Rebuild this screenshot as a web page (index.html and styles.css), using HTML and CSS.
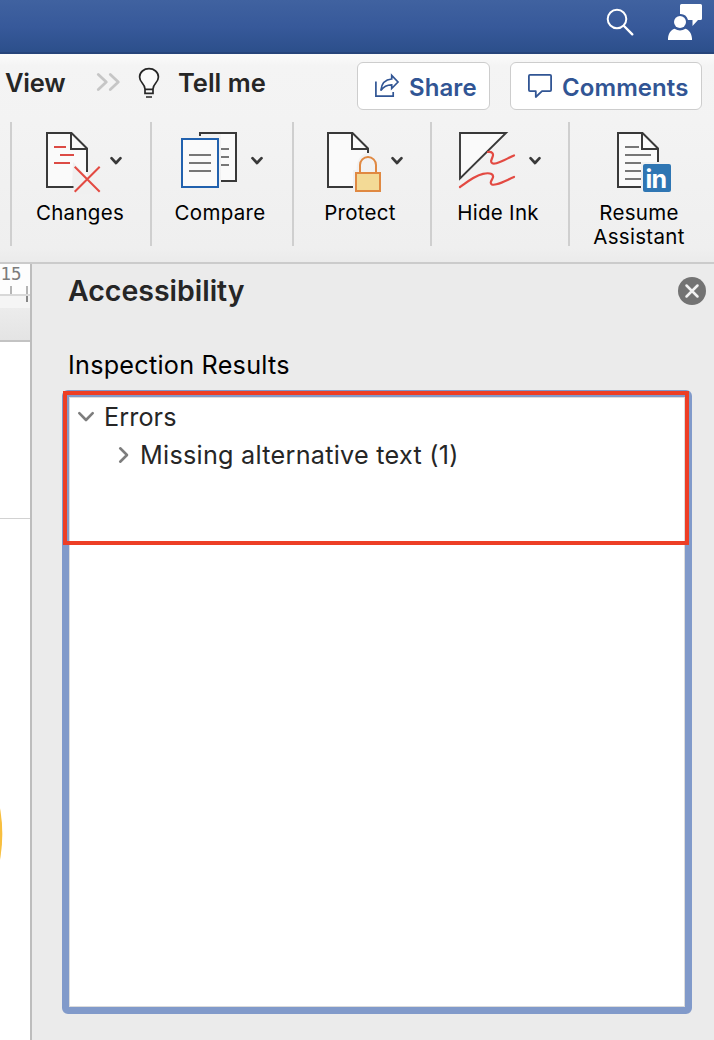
FILE: index.html
```html
<!DOCTYPE html>
<html lang="en">
<head>
<meta charset="utf-8">
<title>Accessibility</title>
<link rel="stylesheet" href="styles.css">
</head>
<body>
<header class="titlebar">
  <svg class="ico-search" width="30" height="30" viewBox="604 6 30 30" fill="none" stroke="#fff"><circle cx="617" cy="19" r="9.3" stroke-width="2"/><path d="M624 26L632.3 34.3" stroke-width="2.4" stroke-linecap="round"/></svg>
  <svg class="ico-user" width="36" height="38" viewBox="667 3 36 38" fill="#fff"><path d="M681.5 4H700.5Q702 4 702 5.500V18.500Q702 20 700.500 20H698L692.500 26V20H688A8 8 0 0 0 680 14V5.500Q680 4 681.500 4Z"/><circle cx="680" cy="22" r="7.600" fill="#37599a"/><circle cx="680" cy="22" r="6"/><path d="M668 40V38.500C668.500 33 671 30 674.500 28.800Q680 32 685.500 28.800C689 30 691.500 33 692 38.500V40Z"/></svg>
</header>

<nav class="tabs">
  <span class="tab tab-view">View</span>
  <svg class="ico-more" width="26" height="24" viewBox="95 70 26 24" fill="none" stroke="#c6c6c6" stroke-width="2.800" stroke-linecap="round" stroke-linejoin="round"><path d="M98.300 74.500L106.300 82L98.300 89.500M110.300 74.500L118.300 82L110.300 89.500"/></svg>
  <svg class="ico-bulb" width="24" height="32" viewBox="137 67 24 32" fill="none" stroke="#262626" stroke-width="1.700"><path d="M145 89C145 83.500 139.600 83 139.600 77C139.600 72 144 68.700 149 68.700S158.400 72 158.400 77C158.400 83 153 83.500 153 89V93.300H145Z" fill="#fbfbfb"/><path d="M145 89.300H153M146 97H152"/></svg>
  <span class="tab tab-tell">Tell me</span>
  <button class="action share">
    <svg width="26" height="26" viewBox="374 74 26 26" fill="none" stroke="#315594" stroke-width="1.700"><path d="M375.900 82.500V97.200H393.200V93"/><path d="M380.800 91.500C381.500 84.500 385 80.500 391.700 80V76.300L398 83L391.700 89.500V85.800C386.500 85.800 383.500 87.500 380.800 91.500Z"/></svg>
    <span class="share-text">Share</span>
  </button>
  <button class="action comments">
    <svg width="26" height="26" viewBox="527 73 26 26" fill="none" stroke="#315594" stroke-width="1.800" stroke-linejoin="round"><path d="M530 74.900H550Q551.100 74.900 551.100 76V90.100Q551.100 91.200 550 91.200H542L535.800 97V91.200H530Q528.900 91.200 528.900 90.100V76Q528.900 74.900 530 74.900Z"/></svg>
    <span class="comments-text">Comments</span>
  </button>
</nav>

<section class="ribbon">
  <div class="group changes">
    <svg width="138" height="72" viewBox="12 122 138 72" fill="none" stroke="#393939" stroke-width="2">
      <path d="M47 133H71L87 149V187H47Z" fill="#fafafa" stroke="none"/><path d="M73 162L100 190V194H78L72 188Z" fill="#f0f0f0" stroke="none"/>
      <path d="M73.500 187H47V133H71.500L87 148.500V172M71 133V149H87"/>
      <path d="M54 147H66M60 155H74M54 163H70" stroke="#dc4b45"/><path d="M74.700 166.700L99.700 191.700M99.700 166.700L74.700 191.700" stroke="#e34a42" stroke-width="2"/>
      <path class="chev" d="M111.500 158.200L116 163L120.500 158.200"/>
    </svg>
    <span class="label">Changes</span>
  </div>
  <div class="group compare">
    <svg width="140" height="72" viewBox="152 122 140 72" fill="none" stroke="#393939" stroke-width="2">
      <path d="M221 134H235V180H221Z" fill="#fafafa" stroke="none"/><path d="M200 136V133H236V181H221"/>
      <path d="M221 149H229M221 157H229M221 165H229" stroke="#777"/>
      <rect x="182" y="139" width="36" height="48" fill="#fafafa" stroke="#2161ae"/><path d="M189 155H211M189 163H211M189 171H211" stroke="#777"/>
      <path class="chev" d="M252.500 158.200L257 163L261.500 158.200"/>
    </svg>
    <span class="label">Compare</span>
  </div>
  <div class="group protect">
    <svg width="136" height="72" viewBox="294 122 136 72" fill="none" stroke="#393939" stroke-width="2">
      <path d="M328 133H352L368 149V153C361 154 357 159 356.500 170H353V187H328Z" fill="#fafafa" stroke="none"/>
      <path d="M353 187H328V133H352.500L368 148.500V153M352 133V149H368"/>
      <g stroke="#e08942"><path d="M360 173V165A8 8 0 0 1 376 165V173"/><rect x="356" y="173" width="24" height="18" fill="#f3da96"/></g>
      <path class="chev" d="M392.500 158.200L397 163L401.500 158.200"/>
    </svg>
    <span class="label">Protect</span>
  </div>
  <div class="group ink">
    <svg width="136" height="72" viewBox="432 122 136 72" fill="none" stroke="#393939" stroke-width="1.900">
      <path d="M460 133H506L460 178.500Z" fill="#fafafa"/>
      <g stroke="#e34a42" stroke-width="2.200" stroke-linecap="round"><path d="M488 152C492 151.500 494 153.500 492.500 157L491.200 160.500C490.700 163.500 493 164.200 496.500 163.200C502.500 161.500 508 158 514 155.500"/><path d="M460 187C468 181 475 175.500 483 173.800C491 172.200 494.500 174.500 492.500 178.500L491 181.500C490 184.500 492.500 185.400 496.500 184.300C503 182.500 508 179.500 514 177"/></g>
      <path class="chev" d="M530.500 158.200L535 163L539.500 158.200"/>
    </svg>
    <span class="label">Hide Ink</span>
  </div>
  <div class="group resume">
    <svg width="144" height="72" viewBox="570 122 144 72" fill="none" stroke="#393939" stroke-width="2">
      <path d="M618 133H642L658 149V162H641V187H618Z" fill="#fafafa" stroke="none"/>
      <path d="M641 187H618V133H642.500L658 148.500V162M642 133V149H658"/>
      <path d="M625 147H639M625 155H651M625 163H641M625 171H641M625 179H641" stroke="#777"/>
      <rect x="643" y="164" width="28" height="28" rx="2" fill="#2f76b3" stroke="none"/>
      <text class="linkedin" x="645.500" y="188">in</text>
    </svg>
    <span class="label">Resume<br>Assistant</span>
  </div>
</section>

<main class="workspace">
  <aside class="document">
    <div class="ruler"><span class="ruler-num">15</span>
      <svg class="ticks" width="30" height="22" viewBox="0 286 30 22" fill="none"><path d="M0 295H30" stroke="#d8d8d8" stroke-width="2"/><path d="M11 286V294M27 286V294" stroke="#b5b5b5" stroke-width="2"/><path d="M27 296V302" stroke="#868686" stroke-width="2"/></svg>
    </div>
    <div class="gutter"></div>
    <div class="page-top"></div>
    <svg class="shape" width="4" height="60" viewBox="0 805 4 60"><ellipse cx="-20" cy="834" rx="22.300" ry="58" fill="#f8bf3f"/></svg>
  </aside>
  <section class="pane">
    <div class="pane-head">
      <h1 class="pane-title">Accessibility</h1>
      <svg class="close" width="28" height="28" viewBox="0 0 28 28"><circle cx="14" cy="14" r="14" fill="#737373"/><path d="M8.500 8.500L19.500 19.500M19.500 8.500L8.500 19.500" stroke="#f2f2f2" stroke-width="2.500" stroke-linecap="round"/></svg>
    </div>
    <h2 class="subtitle">Inspection Results</h2>
    <div class="results">
      <div class="row errors"><svg width="18" height="12" viewBox="0 0 18 12" fill="none" stroke="#7d7d7d" stroke-width="2.600" stroke-linecap="round" stroke-linejoin="round"><path d="M2.300 2.200L9 9L15.700 2.200"/></svg><span class="errors-text">Errors</span></div>
      <div class="row missing"><svg width="12" height="18" viewBox="0 0 12 18" fill="none" stroke="#7d7d7d" stroke-width="2.600" stroke-linecap="round" stroke-linejoin="round"><path d="M2.200 2.300L9 9L2.200 15.700"/></svg><span class="missing-text">Missing alternative text (1)</span></div>
      <div class="highlight"></div>
    </div>
  </section>
</main>
</body>
</html>
```

FILE: styles.css
```css
* { box-sizing: border-box; }
body { margin: 0; width: 714px; height: 1040px; overflow: hidden; background: #ebebeb; font-family: Inter, "Liberation Sans", sans-serif; color: #262626; display: flex; flex-direction: column; }
svg { display: block; flex: none; }
h1, h2 { margin: 0; }
span, h1, h2 { white-space: nowrap; }

.titlebar { height: 54px; flex: none; display: flex; justify-content: flex-end; gap: 33px; padding: 3px 11px 0 0; background: linear-gradient(#4062a0, #37599a 50%, #2c4f8b 96%, #27457b 96%); }
.ico-search { margin-top: 3px; }

.tabs { height: 68px; flex: none; display: flex; align-items: flex-start; padding: 8px 12px 0 5px; background: linear-gradient(#fbfbfb, #f4f4f4 12px, #f3f3f3); }
.tab { font-size: 25.5px; font-weight: 560; line-height: 42px; }
.tab-view { width: 90px; letter-spacing: -.2px; }
.ico-more { margin-top: 8px; }
.ico-bulb { margin: 5px 0 0 16px; }
.tab-tell { width: 179px; margin-left: 17px; letter-spacing: 0; }
.action { height: 48px; display: flex; align-items: center; border: 1px solid #cdcdcd; border-radius: 6px; background: #fff; color: #315594; font: 600 24px/32px Inter, "Liberation Sans", sans-serif; }
.action span { padding-top: 4px; letter-spacing: .08px; }
.share { width: 133px; padding: 0 0 0 16px; gap: 9px; }
.comments { width: 192px; margin-left: 20px; padding: 0 0 0 16px; gap: 9px; }

.ribbon { height: 142px; flex: none; display: flex; align-items: flex-start; padding-left: 10px; border-bottom: 2px solid #cbcbcb; background: linear-gradient(#f3f3f3, #efefef 90%, #ebebeb); }
.group { height: 124px; border-left: 2px solid #cfcfcf; display: flex; flex-direction: column; align-items: center; }
.label { margin: 7px 4px 0 0; text-align: center; color: #000; font-size: 20.5px; line-height: 24px; letter-spacing: .3px; }
.changes .label { margin-right: 2px; }
.resume .label { margin-right: 6px; }
.chev { stroke-width: 2.700; stroke-linecap: round; stroke-linejoin: round; }
.linkedin { fill: #fff; stroke: none; font: 700 25px Inter, sans-serif; letter-spacing: -.8px; }

.workspace { flex: 1; display: flex; }
.document { width: 32px; border-right: 2px solid #bdbdbd; background: #fff; }
.ruler { height: 44px; background: linear-gradient(#fdfdfd 30px, #f5f5f5 30px); }
.ruler-num { display: block; height: 22px; font: 17.500px/20px "DejaVu Sans Mono", monospace; letter-spacing: 0; padding-left: .5px; color: #7c7c7c; }
.gutter { height: 34px; border-bottom: 2px solid #c3c3c3; background: linear-gradient(#ececec, #e4e4e4); }
.page-top { height: 177px; border-bottom: 1px solid #d2d2d2; }
.shape { margin-top: 286px; }

.pane { flex: 1; padding: 0 8px 0 30px; background: #ebebeb; }
.pane-head { height: 80px; display: flex; justify-content: space-between; padding: 7px 0 0 6px; }
.pane-title { font-size: 28.5px; font-weight: 580; line-height: 40px; letter-spacing: -.02px; }
.close { margin-top: 6px; }
.subtitle { height: 46px; padding-left: 6px; color: #000; font-size: 25.2px; font-weight: 400; line-height: 42px; letter-spacing: .25px; }
.results { position: relative; width: 630px; height: 624px; border: 7px solid #819aca; border-radius: 6px; background: #fff; box-shadow: inset 0 0 0 1px #dcdcdc; }
.row { height: 38px; display: flex; align-items: center; font-size: 25.2px; line-height: 38px; }
.errors { padding-left: 8px; margin-top: 1px; gap: 9px; }
.errors-text { letter-spacing: .1px; }
.missing { padding-left: 49px; gap: 10px; }
.missing-text { letter-spacing: .27px; }
.highlight { position: absolute; left: -6px; top: -6px; width: 626px; height: 154px; border: 4px solid #ed3e25; }
```
